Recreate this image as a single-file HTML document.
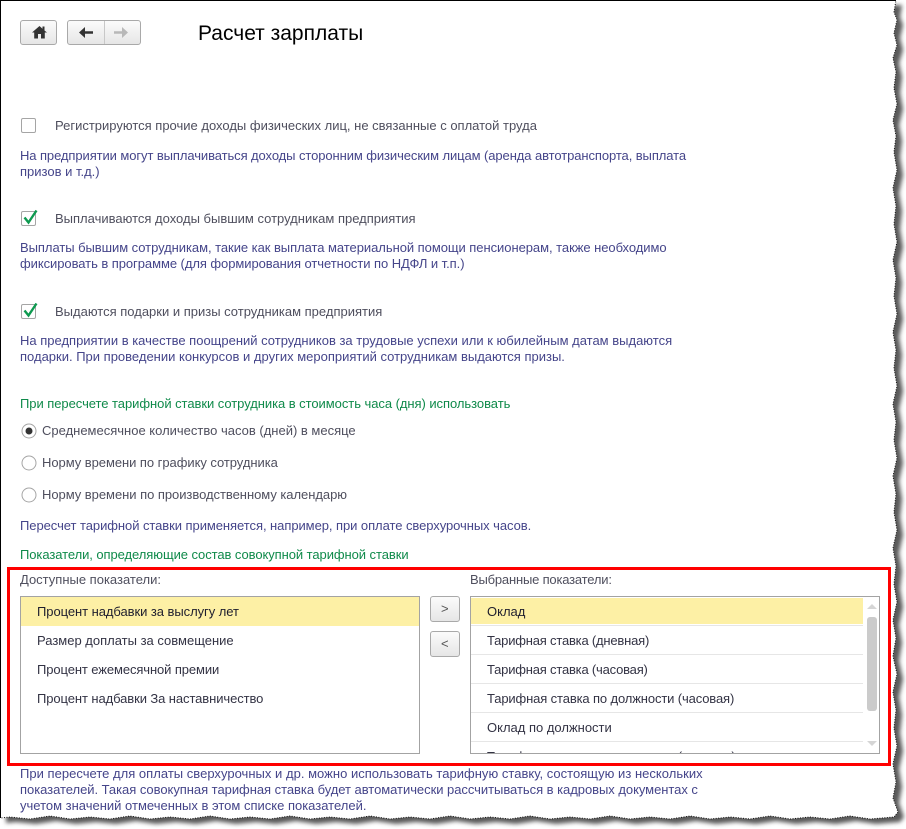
<!DOCTYPE html>
<html lang="ru"><head><meta charset="utf-8"><title>Расчет зарплаты</title>
<style>
html,body{margin:0;padding:0;background:#fff}
#p{position:relative;width:906px;height:829px;overflow:hidden;background:#fff;font:13px/14px "Liberation Sans","Noto Sans CJK SC",sans-serif}
#p>div,#p>svg{position:absolute}
.t{white-space:nowrap}
.l{color:#4f4f5e}.h{color:#45458a}.g{color:#0f8a4a}.k{color:#333344}
.b{box-sizing:border-box;border:1px solid #a9a9a9;border-radius:3px;background:linear-gradient(#fbfbfb,#e6e6e6)}
.list{box-sizing:border-box;border:1px solid #a3a3a3;background:#fff}
.y{background:#fdf0a5}.s{background:#e6e6e6;height:1px}
</style></head><body><div id="p">
<svg style="left:0;top:0" width="906" height="829" viewBox="0 0 906 829">
<defs><filter id="f" x="-5%" y="-5%" width="110%" height="110%"><feGaussianBlur stdDeviation="2.2"/></filter></defs>
<path id="sh" transform="translate(6,5)" fill="#5a5a5a" filter="url(#f)" d="M0 0H896L894 12 897 20 894 33 897 45 893 58 896 72 894 88 897 104 893 120 896 136 894 152 897 170 893 188 896 206 894 224 897 242 893 260 896 278 894 296 897 314 893 332 896 350 894 368 897 386 893 404 896 422 894 440 897 458 893 476 896 494 894 512 897 530 893 548 896 566 894 584 897 602 893 620 896 638 893 656 897 674 893 692 896 710 894 728 897 746 893 764 896 782 893 798 898 812 894 817 870 819 850 816 830 819 810 817 790 819 770 816 750 819 730 817 710 819 690 816 670 819 650 817 630 819 610 816 590 819 570 817 550 819 530 816 510 819 490 817 470 819 450 816 430 819 410 817 390 819 370 816 350 819 330 817 310 819 290 816 270 819 250 817 230 819 210 816 190 819 170 817 150 819 130 816 110 819 90 817 70 819 50 816 30 819 10 817 0 818Z"/>
<path fill="#fff" stroke="#111" stroke-width="1" stroke-dasharray="1 1.500" d="M0 0H896L894 12 897 20 894 33 897 45 893 58 896 72 894 88 897 104 893 120 896 136 894 152 897 170 893 188 896 206 894 224 897 242 893 260 896 278 894 296 897 314 893 332 896 350 894 368 897 386 893 404 896 422 894 440 897 458 893 476 896 494 894 512 897 530 893 548 896 566 894 584 897 602 893 620 896 638 893 656 897 674 893 692 896 710 894 728 897 746 893 764 896 782 893 798 898 812 894 817 870 819 850 816 830 819 810 817 790 819 770 816 750 819 730 817 710 819 690 816 670 819 650 817 630 819 610 816 590 819 570 817 550 819 530 816 510 819 490 817 470 819 450 816 430 819 410 817 390 819 370 816 350 819 330 817 310 819 290 816 270 819 250 817 230 819 210 816 190 819 170 817 150 819 130 816 110 819 90 817 70 819 50 816 30 819 10 817 0 818Z"/>
<path d="M0 .5H896M.5 0V818" stroke="#000" stroke-width="1" fill="none"/>
</svg>

<div class="b" style="left:20px;top:20px;width:37px;height:25px"></div>
<svg style="left:32px;top:25px" width="15" height="14" viewBox="0 0 15 14"><path fill="#333" d="M7.500 1 L10.500 3.700 V1.500 H12.500 V5.500 L15 7.500 H12.800 V13.500 H9 V9 H6 V13.500 H2.200 V7.500 H0Z"/></svg>
<div class="b" style="left:67px;top:20px;width:74px;height:25px"></div>
<div style="left:104px;top:21px;width:1px;height:23px;background:#c8c8c8"></div>
<svg style="left:78px;top:26px" width="16" height="13" viewBox="0 0 16 13"><path fill="#333" d="M1 6.500 L7 1 V5.200 H15 V7.800 H7 V12Z"/></svg>
<svg style="left:113px;top:26px" width="16" height="13" viewBox="0 0 16 13"><path fill="#b8b8b8" d="M15 6.500 L9 1 V5.200 H1 V7.800 H9 V12Z"/></svg>

<div class="t" style="left:198px;top:22px;font-size:21px;line-height:24px;color:#000">Расчет зарплаты</div>

<div style="box-sizing:border-box;left:21px;top:118px;width:15px;height:15px;border:1px solid #a5a5a5;border-radius:2px;background:#fff"></div>
<div class="t l" style="left:55px;top:119px">Регистрируются прочие доходы физических лиц, не связанные с оплатой труда</div>
<div class="t h" style="left:20px;top:149px;letter-spacing:-.087px">На предприятии могут выплачиваться доходы сторонним физическим лицам (аренда автотранспорта, выплата</div>
<div class="t h" style="left:20px;top:165px">призов и т.д.)</div>

<div style="box-sizing:border-box;left:21px;top:211px;width:15px;height:15px;border:1px solid #a5a5a5;border-radius:2px;background:#fff"></div>
<svg style="left:21px;top:208px" width="18" height="18" viewBox="0 0 18 18"><path d="M3.500 9.500 L7.500 14.500 L15.500 2.500" fill="none" stroke="#0e9a50" stroke-width="2.400"/></svg>
<div class="t l" style="left:55px;top:212px">Выплачиваются доходы бывшим сотрудникам предприятия</div>
<div class="t h" style="left:20px;top:241px;letter-spacing:-.05px">Выплаты бывшим сотрудникам, такие как выплата материальной помощи пенсионерам, также необходимо</div>
<div class="t h" style="left:20px;top:257px;letter-spacing:-.06px">фиксировать в программе (для формирования отчетности по НДФЛ и т.п.)</div>

<div style="box-sizing:border-box;left:21px;top:304px;width:15px;height:15px;border:1px solid #a5a5a5;border-radius:2px;background:#fff"></div>
<svg style="left:21px;top:301px" width="18" height="18" viewBox="0 0 18 18"><path d="M3.500 9.500 L7.500 14.500 L15.500 2.500" fill="none" stroke="#0e9a50" stroke-width="2.400"/></svg>
<div class="t l" style="left:55px;top:305px">Выдаются подарки и призы сотрудникам предприятия</div>
<div class="t h" style="left:20px;top:334px">На предприятии в качестве поощрений сотрудников за трудовые успехи или к юбилейным датам выдаются</div>
<div class="t h" style="left:20px;top:350px">подарки. При проведении конкурсов и других мероприятий сотрудникам выдаются призы.</div>

<div class="t g" style="left:20px;top:397px;letter-spacing:-.05px">При пересчете тарифной ставки сотрудника в стоимость часа (дня) использовать</div>

<svg style="left:20px;top:422px" width="18" height="82" viewBox="0 0 18 82">
<g fill="#fff" stroke="#a5a5a5"><circle cx="9" cy="9" r="7"/><circle cx="9" cy="41" r="7"/><circle cx="9" cy="73" r="7"/></g>
<circle cx="9" cy="9" r="3.500" fill="#333"/></svg>
<div class="t l" style="left:42px;top:424px">Среднемесячное количество часов (дней) в месяце</div>
<div class="t l" style="left:42px;top:456px;letter-spacing:-.05px">Норму времени по графику сотрудника</div>
<div class="t l" style="left:42px;top:488px;letter-spacing:-.04px">Норму времени по производственному календарю</div>

<div class="t h" style="left:20px;top:519px;letter-spacing:-.06px">Пересчет тарифной ставки применяется, например, при оплате сверхурочных часов.</div>
<div class="t g" style="left:20px;top:548px;letter-spacing:-.07px">Показатели, определяющие состав совокупной тарифной ставки</div>

<div style="box-sizing:border-box;left:7px;top:567px;width:884px;height:199px;border:3px solid #f00"></div>

<div class="t l" style="left:20px;top:573px">Доступные показатели:</div>
<div class="t l" style="left:470px;top:573px;letter-spacing:-.19px">Выбранные показатели:</div>

<div class="list" style="left:20px;top:596px;width:400px;height:158px"></div>
<div class="y" style="left:21px;top:597px;width:398px;height:29px"></div>
<div class="t" style="left:37px;top:605px;color:#1e1e2e;letter-spacing:-.06px">Процент надбавки за выслугу лет</div>
<div class="t k" style="left:37px;top:634px">Размер доплаты за совмещение</div>
<div class="t k" style="left:37px;top:663px;letter-spacing:-.1px">Процент ежемесячной премии</div>
<div class="t k" style="left:37px;top:692px;letter-spacing:-.09px">Процент надбавки За наставничество</div>

<div class="b" style="left:430px;top:596px;width:30px;height:26px"></div>
<div class="t" style="left:441px;top:602px;color:#555">&gt;</div>
<div class="b" style="left:430px;top:631px;width:30px;height:26px"></div>
<div class="t" style="left:441px;top:637px;color:#555">&lt;</div>

<div class="list" style="left:470px;top:596px;width:410px;height:158px"></div>
<div class="y" style="left:471px;top:598px;width:392px;height:26px"></div>
<div class="s" style="left:471px;top:625px;width:392px"></div>
<div class="s" style="left:471px;top:654px;width:392px"></div>
<div class="s" style="left:471px;top:683px;width:392px"></div>
<div class="s" style="left:471px;top:712px;width:392px"></div>
<div class="s" style="left:471px;top:741px;width:392px"></div>
<div class="t" style="left:487px;top:605px;color:#1e1e2e">Оклад</div>
<div class="t k" style="left:487px;top:634px;letter-spacing:-.2px">Тарифная ставка (дневная)</div>
<div class="t k" style="left:487px;top:663px;letter-spacing:-.2px">Тарифная ставка (часовая)</div>
<div class="t k" style="left:487px;top:692px;letter-spacing:-.13px">Тарифная ставка по должности (часовая)</div>
<div class="t k" style="left:487px;top:721px">Оклад по должности</div>
<div style="left:471px;top:742px;width:392px;height:11px;overflow:hidden"><div class="t k" style="position:absolute;left:16px;top:8px;letter-spacing:-.13px">Тарифная ставка по должности (дневная)</div></div>

<div style="left:867px;top:617px;width:10px;height:94px;background:#cbcbcb;border-radius:3px"></div>
<svg style="left:867px;top:604px" width="10" height="6"><path d="M0 5 L5 0 L10 5Z" fill="#d5d5d5"/></svg>
<svg style="left:867px;top:741px" width="10" height="6"><path d="M0 0 L10 0 L5 5Z" fill="#d5d5d5"/></svg>

<div class="t h" style="left:20px;top:767px;letter-spacing:.02px">При пересчете для оплаты сверхурочных и др. можно использовать тарифную ставку, состоящую из нескольких</div>
<div class="t h" style="left:20px;top:783px;letter-spacing:-.04px">показателей. Такая совокупная тарифная ставка будет автоматически рассчитываться в кадровых документах с</div>
<div class="t h" style="left:20px;top:799px">учетом значений отмеченных в этом списке показателей.</div>
</div></body></html>
